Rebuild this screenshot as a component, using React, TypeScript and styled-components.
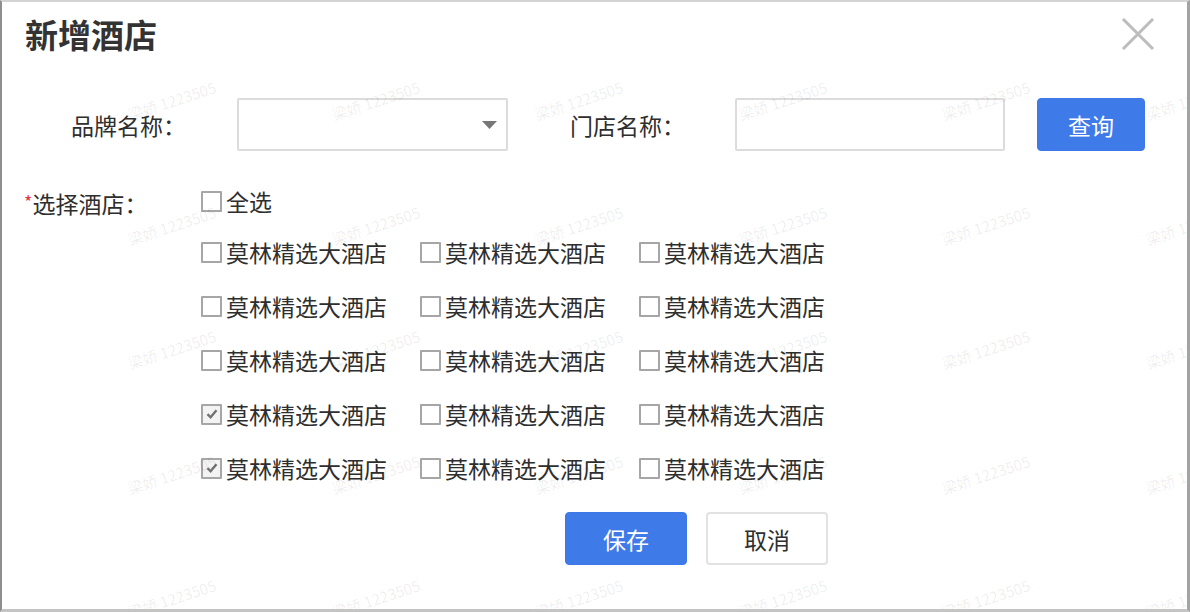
import React from 'react';
import styled, { createGlobalStyle } from 'styled-components';

const GlobalStyle = createGlobalStyle`
  html, body {
    margin: 0;
    padding: 0;
    background: #fff;
  }
  body {
    font-family: "Noto Sans CJK SC", "Noto Sans", "Liberation Sans", sans-serif;
    color: #2e2e2e;
  }
  * {
    box-sizing: border-box;
  }
`;

const Dialog = styled.div`
  position: relative;
  width: 1190px;
  height: 612px;
  background: #fff;
  border-top: 2px solid #d4d4d4;
  border-left: 2px solid #8e8e8e;
  border-right: 3px solid #a3a3a3;
  border-bottom: 3px solid #c4c4c4;
  padding-top: 12px;
  overflow: hidden;
`;

const Header = styled.div`
  display: flex;
  align-items: center;
  justify-content: space-between;
  padding: 0 32px 0 23px;
  height: 40px;
`;

const Title = styled.h1`
  margin: 0;
  font-size: 33px;
  line-height: 40px;
  font-weight: 700;
  color: #333;
`;

const CloseButton = styled.button`
  display: flex;
  align-items: center;
  justify-content: center;
  width: 34px;
  height: 32px;
  padding: 0;
  border: none;
  background: transparent;
  cursor: pointer;
`;

const SearchRow = styled.div`
  display: flex;
  align-items: center;
  margin-top: 44px;
  padding-left: 69px;
  height: 53px;
`;

const Label = styled.span<{ $width: number; $offset?: number }>`
  width: ${p => p.$width}px;
  margin-left: ${p => p.$offset ?? 0}px;
  flex: none;
  font-size: 23px;
  line-height: 30px;
  color: #2e2e2e;
  white-space: nowrap;
`;

const Required = styled.span`
  color: #e5353c;
  font-size: 18px;
  vertical-align: 4px;
`;

const SelectBox = styled.div`
  position: relative;
  display: flex;
  align-items: center;
  justify-content: flex-end;
  width: 271px;
  height: 53px;
  border: 2px solid #dcdcdc;
  border-radius: 2px;
  padding-right: 9px;
  background: transparent;
`;

const TextInput = styled.input`
  width: 270px;
  height: 53px;
  border: 2px solid #dcdcdc;
  border-radius: 2px;
  padding: 0 10px;
  font-size: 20px;
  background: transparent;
  outline: none;
`;

const Button = styled.button<{ $primary?: boolean; $width: number; $offset?: number }>`
  flex: none;
  width: ${p => p.$width}px;
  height: 53px;
  margin-left: ${p => p.$offset ?? 0}px;
  border-radius: 4px;
  border: ${p => (p.$primary ? '1px solid #3d78e8' : '2px solid #e2e2e2')};
  background: ${p => (p.$primary ? '#3f7ae9' : '#fff')};
  color: ${p => (p.$primary ? '#fff' : '#2e2e2e')};
  font-family: inherit;
  font-size: 23px;
  cursor: pointer;
`;

const HotelSection = styled.div`
  display: flex;
  align-items: flex-start;
  margin-top: 35px;
  padding-left: 22px;
`;

const CheckList = styled.div`
  display: flex;
  flex-direction: column;
`;

const HotelGrid = styled.div`
  display: grid;
  grid-template-columns: repeat(3, 219px);
  grid-auto-rows: 54px;
  margin-top: 9px;
`;

const CheckItem = styled.label<{ $height: number }>`
  display: flex;
  align-items: center;
  gap: 4px;
  height: ${p => p.$height}px;
  font-size: 23px;
  color: #2e2e2e;
  cursor: pointer;
  white-space: nowrap;
`;

const Box = styled.span<{ $checked?: boolean }>`
  display: flex;
  align-items: center;
  justify-content: center;
  flex: none;
  width: 21px;
  height: 21px;
  border: 2px solid #a6a6a6;
  border-radius: 1px;
  background: ${p => (p.$checked ? '#f3f3f3' : '#fff')};
`;

const Footer = styled.div`
  display: flex;
  gap: 19px;
  margin-top: 17px;
  padding-left: 563px;
`;

const WatermarkLayer = styled.div`
  position: absolute;
  inset: 0;
  display: grid;
  grid-template-columns: repeat(6, 203.5px);
  grid-auto-rows: 124.5px;
  padding: 36px 0 0 68px;
  pointer-events: none;
  overflow: hidden;
`;

const Mark = styled.span`
  display: flex;
  align-items: center;
  justify-content: center;
  font-size: 15px;
  color: rgba(0, 0, 0, 0.075);
  transform: rotate(-18deg);
  white-space: nowrap;
`;

const CheckBox: React.FC<{ checked?: boolean; label: string; height: number }> = ({ checked, label, height }) => (
  <CheckItem $height={height}>
    <Box $checked={checked}>
      {checked && (
        <svg width="14" height="14" viewBox="0 0 14 14">
          <path d="M2.5 7.2 L5.6 10.3 L11.5 3.2" fill="none" stroke="#727272" strokeWidth="2.4" />
        </svg>
      )}
    </Box>
    <span>{label}</span>
  </CheckItem>
);

const checkedRows = [3, 4];

export default function App() {
  const hotels = Array.from({ length: 15 }, (_, i) => ({
    name: '莫林精选大酒店',
    checked: i % 3 === 0 && checkedRows.includes(Math.floor(i / 3)),
  }));

  return (
    <>
      <GlobalStyle />
      <Dialog>
        <Header>
          <Title>新增酒店</Title>
          <CloseButton aria-label="关闭">
            <svg width="34" height="32" viewBox="0 0 34 32">
              <path d="M2 1 L32 31 M32 1 L2 31" stroke="#bdbdbd" strokeWidth="3" />
            </svg>
          </CloseButton>
        </Header>

        <SearchRow>
          <Label $width={166}>品牌名称：</Label>
          <SelectBox>
            <svg width="15" height="8" viewBox="0 0 15 8">
              <path d="M0 0 H15 L7.5 8 Z" fill="#777" />
            </svg>
          </SelectBox>
          <Label $width={165} $offset={62}>门店名称：</Label>
          <TextInput />
          <Button $primary $width={108} $offset={32}>查询</Button>
        </SearchRow>

        <HotelSection>
          <Label $width={177}>
            <Required>*</Required>选择酒店：
          </Label>
          <CheckList>
            <CheckBox label="全选" height={30} />
            <HotelGrid>
              {hotels.map((h, i) => (
                <CheckBox key={i} label={h.name} checked={h.checked} height={54} />
              ))}
            </HotelGrid>
          </CheckList>
        </HotelSection>

        <Footer>
          <Button $primary $width={122}>保存</Button>
          <Button $width={122}>取消</Button>
        </Footer>

        <WatermarkLayer aria-hidden="true">
          {Array.from({ length: 30 }, (_, i) => (
            <Mark key={i}>梁娇 1223505</Mark>
          ))}
        </WatermarkLayer>
      </Dialog>
    </>
  );
}
